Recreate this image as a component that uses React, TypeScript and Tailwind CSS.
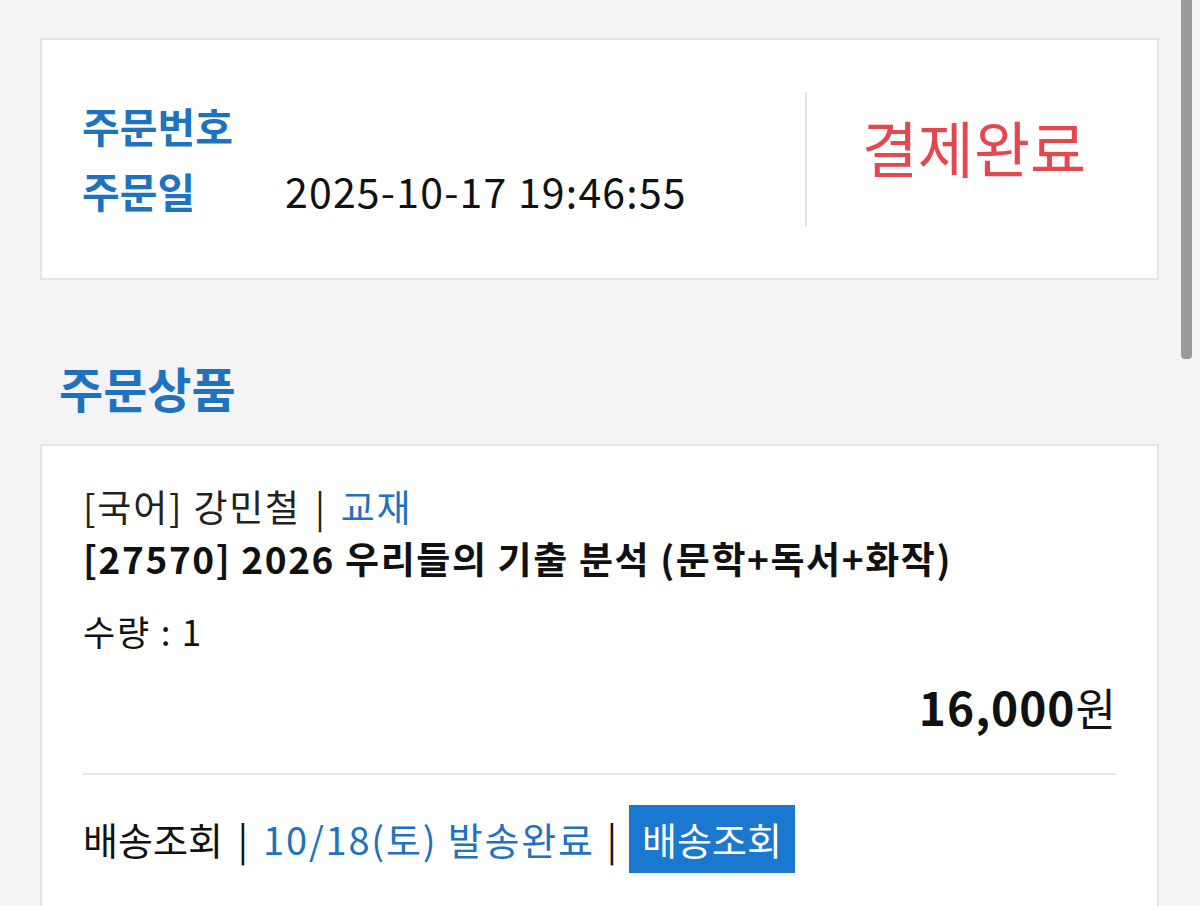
import React from "react";

const font = { fontFamily: '"Noto Sans CJK KR", "Noto Sans", sans-serif' };

export default function App() {
  return (
    <div
      className="relative w-[1200px] h-[906px] overflow-hidden bg-[#f4f4f6] text-[#111]"
      style={font}
    >
      <div className="px-[40px] pt-[38px] pr-[41px]">
        {/* Order info card */}
        <div className="h-[242px] border-2 border-[#e4e4e6] bg-white flex items-center">
          <div className="w-[763px] pl-[40px] flex flex-col pb-[2px]">
            <div className="flex items-center h-[65px]">
              <span className="w-[203px] text-[41px] font-bold text-[#1f72bd] leading-none">주문번호</span>
            </div>
            <div className="flex items-center h-[65px]">
              <span className="w-[203px] text-[41px] font-bold text-[#1f72bd] leading-none">주문일</span>
              <span className="text-[41px] leading-none text-[#111] tracking-[1.2px]">2025-10-17 19:46:55</span>
            </div>
          </div>
          <div className="w-[2px] h-[134px] bg-[#e2e2e2]" />
          <div className="flex-1 flex items-center justify-center pb-[26px] pr-[16px]">
            <span className="text-[61px] leading-none text-[#e2484e]">결제완료</span>
          </div>
        </div>

        {/* Section heading */}
        <div className="pl-[19px] pt-[84px] pb-[34px]">
          <h2 className="text-[48px] font-bold text-[#1f72bd] leading-[46px]">주문상품</h2>
        </div>

        {/* Product card */}
        <div className="border-2 border-[#e4e4e6] bg-white px-[41px] pt-[34px] h-[470px]">
          <div className="text-[37px] leading-[52px] text-[#222] tracking-[1.8px]">
            [국어] 강민철<span className="mx-[14px]">|</span><span className="text-[#1f72bd]">교재</span>
          </div>
          <div className="text-[37px] leading-[52px] font-bold text-[#111] tracking-[1.6px]">
            [27570] 2026 우리들의 기출 분석 (문학+독서+화작)
          </div>
          <div className="mt-[21px] text-[35px] leading-[52px] text-[#111] tracking-[1.8px]">수량 : 1</div>
          <div className="mt-[23px] text-right text-[46px] leading-[52px] font-bold text-[#111] tracking-[1px]">
            16,000<span className="font-normal text-[44px] tracking-normal">원</span>
          </div>
          <div className="mt-[40px] h-[2px] bg-[#e6e6e6]" />
          <div className="mt-[30px] flex items-center h-[68px] text-[38px] leading-none">
            <span className="text-[#111]">배송조회</span>
            <span className="mx-[15px] text-[#111]">|</span>
            <span className="text-[#1f72bd] tracking-[1.8px]">10/18(토) 발송완료</span>
            <span className="mx-[12px] text-[#111]">|</span>
            <span className="h-[68px] px-[13px] flex items-center bg-[#1b78cf] text-white text-[38px]">배송조회</span>
          </div>
        </div>
      </div>

      {/* scrollbar */}
      <div className="absolute left-[1181px] top-0 w-[11px] h-[359px] bg-[#9a9a9c] rounded-b-[4px]" />
    </div>
  );
}
